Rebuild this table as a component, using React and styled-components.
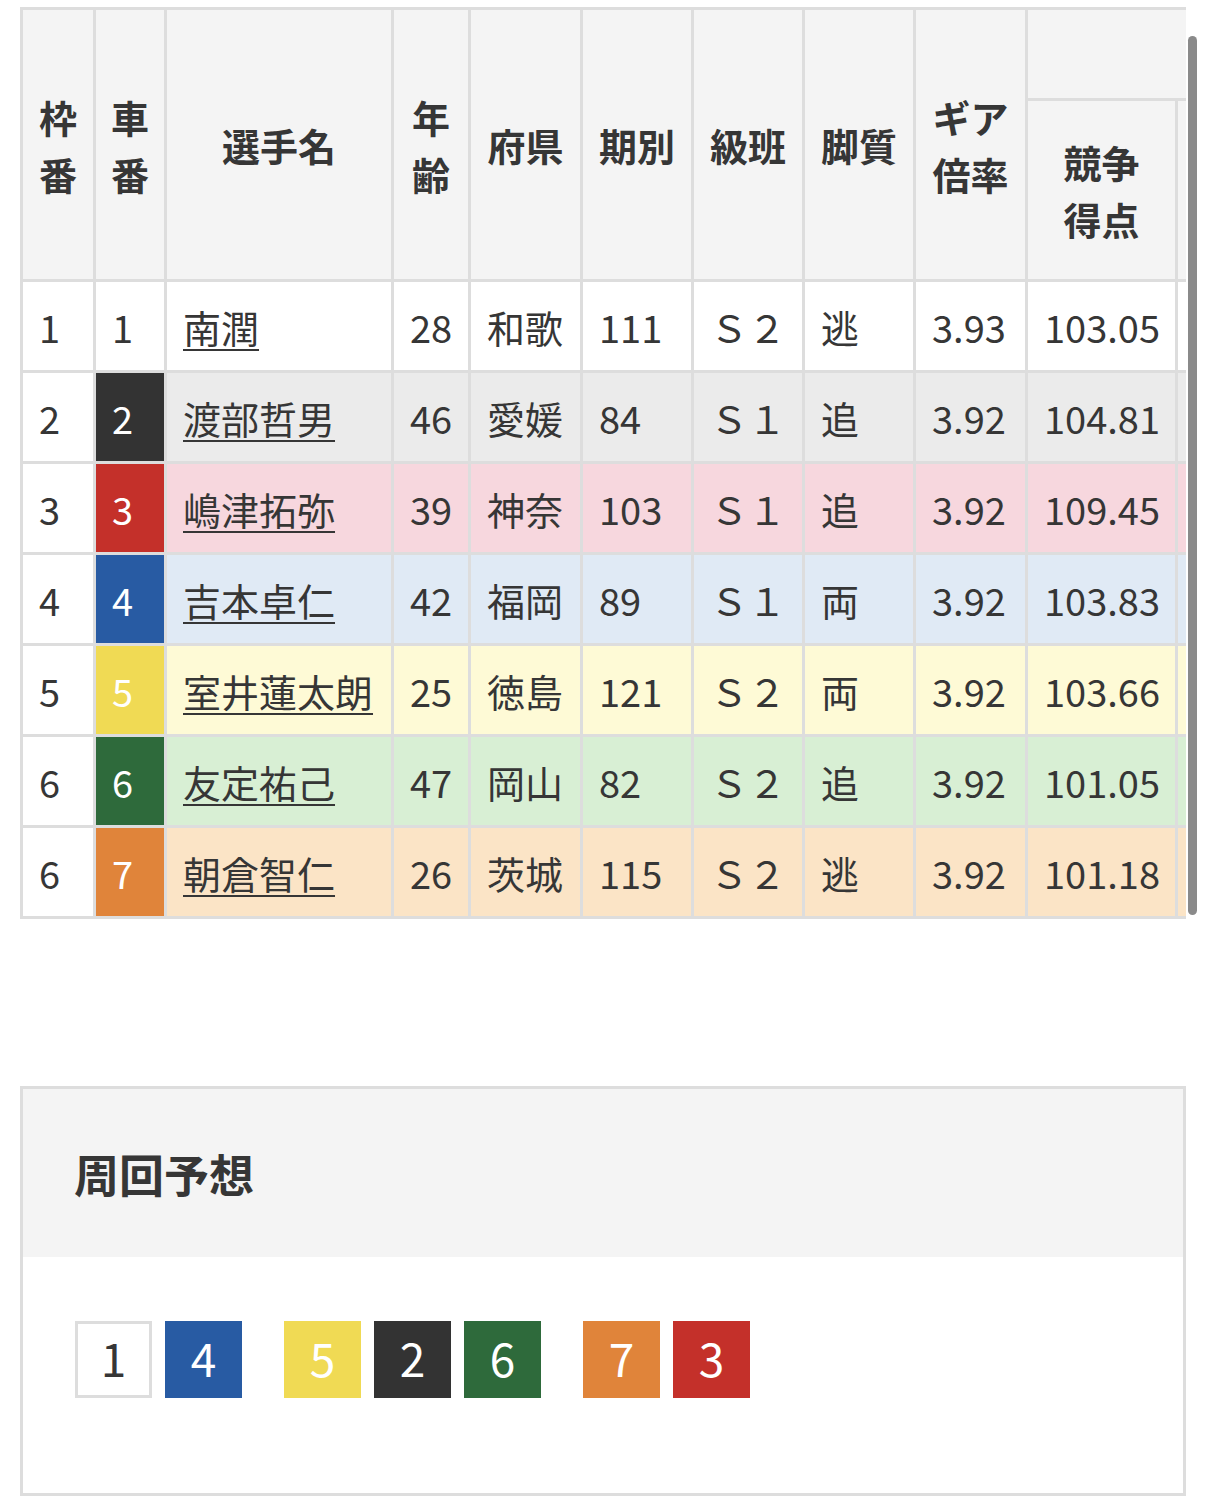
import React from 'react';
import styled, { createGlobalStyle } from 'styled-components';

const GlobalStyle = createGlobalStyle`
  * { box-sizing: border-box; }
  html, body { margin: 0; padding: 0; background: #fff; }
  body {
    font-family: "Noto Sans CJK JP", "Noto Sans", sans-serif;
    color: #363636;
  }
`;

const Page = styled.div`
  width: 1206px;
  padding: 7px 0 8px 20px;
`;

const TableSection = styled.section`
  display: flex;
  align-items: flex-start;
  gap: 2px;
  margin-bottom: 167px;
`;

const Scroller = styled.div`
  width: 1166px;
  overflow: hidden;
`;

const ScrollThumb = styled.div`
  width: 9px;
  height: 879px;
  margin-top: 29px;
  border-radius: 5px;
  background: #8a8a8a;
`;

const Table = styled.table`
  border-collapse: separate;
  border-spacing: 0;
  table-layout: fixed;
  width: 1598px;
  border-top: 3px solid #ddd;
  border-left: 3px solid #ddd;
  font-size: 38px;
  line-height: 57px;
`;

const HeadRow = styled.tr`
  height: ${(p) => p.$h}px;
`;

const Th = styled.th`
  background: #f4f4f4;
  font-weight: 700;
  text-align: center;
  vertical-align: middle;
  padding: 0;
  white-space: nowrap;
  border-right: 3px solid #ddd;
  border-bottom: 3px solid #ddd;
  color: #363636;
`;

const BodyRow = styled.tr`
  height: 91px;
  background: ${(p) => p.$bg};
`;

const Td = styled.td`
  padding: 0 0 0 16px;
  text-align: left;
  vertical-align: middle;
  white-space: nowrap;
  border-right: 3px solid #ddd;
  border-bottom: 3px solid #ddd;
  font-weight: 400;
`;

const WakuCell = styled(Td)`
  background: #fff;
`;

const CarCell = styled(Td)`
  background: ${(p) => p.$bg};
  color: ${(p) => p.$fg};
`;

const NameLink = styled.a`
  color: #363636;
  text-decoration: underline;
  text-decoration-thickness: 2px;
  text-underline-offset: 6px;
`;

const ForecastBox = styled.section`
  width: 1166px;
  border: 3px solid #ddd;
`;

const ForecastHeader = styled.div`
  height: 168px;
  background: #f4f4f4;
  display: flex;
  align-items: center;
  padding-left: 51px;
`;

const ForecastTitle = styled.h3`
  margin: 0;
  font-size: 45px;
  font-weight: 700;
  line-height: 1;
  color: #363636;
`;

const ForecastBody = styled.div`
  height: 236px;
  background: #fff;
  padding: 64px 0 0 52px;
  display: flex;
  align-items: flex-start;
  gap: 42px;
`;

const ChipGroup = styled.div`
  display: flex;
  gap: 13px;
`;

const Chip = styled.div`
  width: 77px;
  height: 77px;
  display: flex;
  align-items: center;
  justify-content: center;
  padding-bottom: 6px;
  font-size: 46px;
  line-height: 1;
  background: ${(p) => p.$bg};
  color: ${(p) => p.$fg};
  border: ${(p) => (p.$outlined ? '3px solid #ddd' : 'none')};
`;

const CAR_COLORS = {
  1: { bg: '#fff', fg: '#363636' },
  2: { bg: '#333333', fg: '#fff' },
  3: { bg: '#c4302a', fg: '#fff' },
  4: { bg: '#285ba3', fg: '#fff' },
  5: { bg: '#f0da54', fg: '#fff' },
  6: { bg: '#2e6a3b', fg: '#fff' },
  7: { bg: '#e0843a', fg: '#fff' },
};

const ROW_BG = {
  1: '#ffffff',
  2: '#ebebeb',
  3: '#f7d7de',
  4: '#e0eaf5',
  5: '#fefad6',
  6: '#d8efd4',
  7: '#fbe4c6',
};

const racers = [
  { waku: 1, car: 1, name: '南潤', age: 28, pref: '和歌', term: 111, cls: 'Ｓ２', style: '逃', gear: '3.93', score: '103.05' },
  { waku: 2, car: 2, name: '渡部哲男', age: 46, pref: '愛媛', term: 84, cls: 'Ｓ１', style: '追', gear: '3.92', score: '104.81' },
  { waku: 3, car: 3, name: '嶋津拓弥', age: 39, pref: '神奈', term: 103, cls: 'Ｓ１', style: '追', gear: '3.92', score: '109.45' },
  { waku: 4, car: 4, name: '吉本卓仁', age: 42, pref: '福岡', term: 89, cls: 'Ｓ１', style: '両', gear: '3.92', score: '103.83' },
  { waku: 5, car: 5, name: '室井蓮太朗', age: 25, pref: '徳島', term: 121, cls: 'Ｓ２', style: '両', gear: '3.92', score: '103.66' },
  { waku: 6, car: 6, name: '友定祐己', age: 47, pref: '岡山', term: 82, cls: 'Ｓ２', style: '追', gear: '3.92', score: '101.05' },
  { waku: 6, car: 7, name: '朝倉智仁', age: 26, pref: '茨城', term: 115, cls: 'Ｓ２', style: '逃', gear: '3.92', score: '101.18' },
];

const COL_WIDTHS = [73, 71, 227, 77, 112, 111, 111, 111, 112, 150, 110, 110, 110, 110];
const EXTRA_COLS = 4;

const forecast = [[1, 4], [5, 2, 6], [7, 3]];

export default function App() {
  return (
    <Page>
      <GlobalStyle />
      <TableSection>
        <Scroller>
          <Table>
            <colgroup>
              {COL_WIDTHS.map((w, i) => (
                <col key={i} style={{ width: w }} />
              ))}
            </colgroup>
            <thead>
              <HeadRow $h={91}>
                <Th rowSpan={2}>枠<br />番</Th>
                <Th rowSpan={2}>車<br />番</Th>
                <Th rowSpan={2}>選手名</Th>
                <Th rowSpan={2}>年<br />齢</Th>
                <Th rowSpan={2}>府県</Th>
                <Th rowSpan={2}>期別</Th>
                <Th rowSpan={2}>級班</Th>
                <Th rowSpan={2}>脚質</Th>
                <Th rowSpan={2}>ギア<br />倍率</Th>
                <Th colSpan={1 + EXTRA_COLS} />
              </HeadRow>
              <HeadRow $h={181}>
                <Th>競争<br />得点</Th>
                {Array.from({ length: EXTRA_COLS }).map((_, i) => (
                  <Th key={i} />
                ))}
              </HeadRow>
            </thead>
            <tbody>
              {racers.map((r) => {
                const c = CAR_COLORS[r.car];
                return (
                  <BodyRow key={r.car} $bg={ROW_BG[r.car]}>
                    <WakuCell>{r.waku}</WakuCell>
                    <CarCell $bg={c.bg} $fg={c.fg}>{r.car}</CarCell>
                    <Td><NameLink href="#">{r.name}</NameLink></Td>
                    <Td>{r.age}</Td>
                    <Td>{r.pref}</Td>
                    <Td>{r.term}</Td>
                    <Td>{r.cls}</Td>
                    <Td>{r.style}</Td>
                    <Td>{r.gear}</Td>
                    <Td>{r.score}</Td>
                    {Array.from({ length: EXTRA_COLS }).map((_, i) => (
                      <Td key={i} />
                    ))}
                  </BodyRow>
                );
              })}
            </tbody>
          </Table>
        </Scroller>
        <ScrollThumb />
      </TableSection>

      <ForecastBox>
        <ForecastHeader>
          <ForecastTitle>周回予想</ForecastTitle>
        </ForecastHeader>
        <ForecastBody>
          {forecast.map((group, gi) => (
            <ChipGroup key={gi}>
              {group.map((n) => (
                <Chip key={n} $bg={CAR_COLORS[n].bg} $fg={CAR_COLORS[n].fg} $outlined={n === 1}>
                  {n}
                </Chip>
              ))}
            </ChipGroup>
          ))}
        </ForecastBody>
      </ForecastBox>
    </Page>
  );
}
